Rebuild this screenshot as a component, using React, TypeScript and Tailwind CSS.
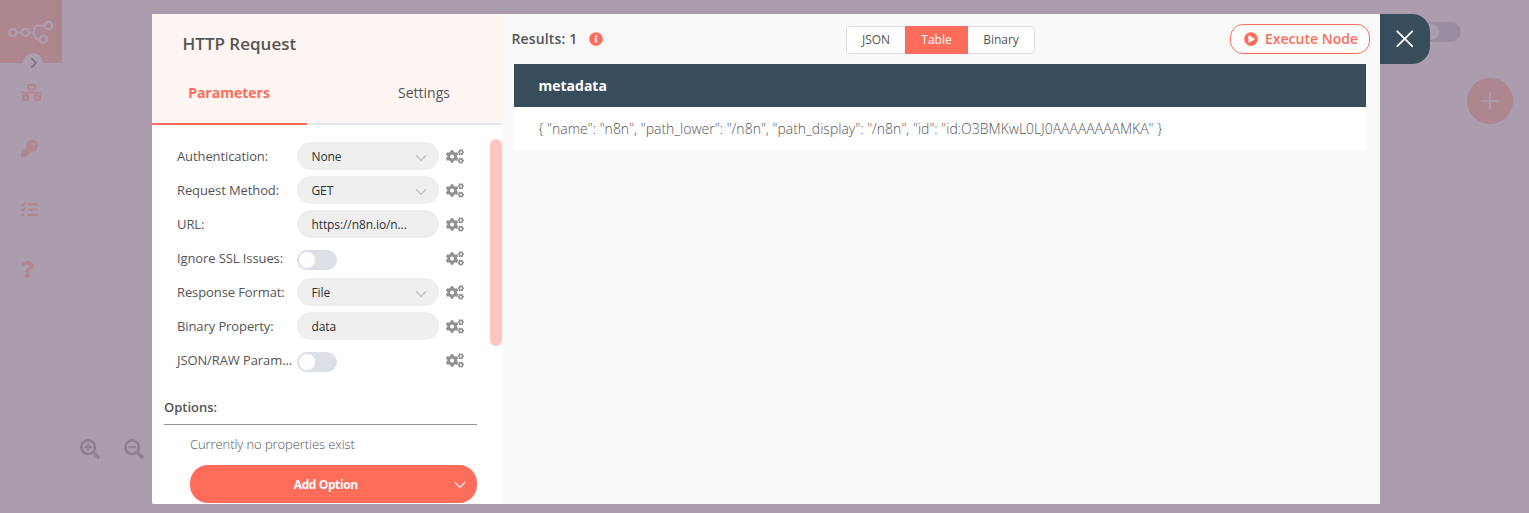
import type { ReactNode } from 'react';
import {
  FaChevronRight,
  FaCogs,
  FaInfoCircle,
  FaKey,
  FaNetworkWired,
  FaPlayCircle,
  FaQuestion,
  FaSearchMinus,
  FaSearchPlus,
  FaTasks,
} from 'react-icons/fa';

function Logo() {
  return (
    <svg width="46" height="24" viewBox="0 0 46 24" fill="none" stroke="#ab9dad" strokeWidth="2.2">
      <circle cx="4.7" cy="12.5" r="3.6" />
      <circle cx="17.3" cy="12.5" r="3.6" />
      <circle cx="40.4" cy="5.5" r="3.6" />
      <circle cx="35.4" cy="19.3" r="3.6" />
      <path d="M8.3 12.5H13.7M20.9 12.5H24.5M36.8 5.5H30.5C27.8 5.5 26.8 7 26.4 9C26 11.2 25.6 12.5 24 12.5C25.6 12.5 26 13.6 26.4 15.4C26.9 18 28 19.3 30.5 19.3H31.8" />
    </svg>
  );
}

function Chevron({ className }: { className: string }) {
  return (
    <svg className={className} width="12" height="8" viewBox="0 0 12 8" fill="none" stroke="currentColor" strokeWidth="1.2">
      <path d="M1 1.2L6 6.4L11 1.2" />
    </svg>
  );
}

function Sidebar() {
  return (
    <aside className="relative flex w-[62px] shrink-0 flex-col bg-[#ab9dad] text-[#b3858e]">
      <div className="flex h-[63px] items-start bg-[#ad868f] pl-2 pt-5">
        <Logo />
      </div>
      <div className="absolute left-[23px] top-[53px] flex h-5 w-5 items-center justify-center rounded-full bg-[#ab9dad] pl-px text-[#84758a]">
        <FaChevronRight size={12} />
      </div>
      <nav className="flex flex-col pl-[21px]">
        <div className="flex h-[59px] items-center"><FaNetworkWired className="h-[17px] w-[21px]" /></div>
        <div className="flex h-[53px] items-center"><FaKey size={17} /></div>
        <div className="flex h-[69px] items-center"><FaTasks size={17} /></div>
        <div className="flex h-[51px] items-center"><FaQuestion className="h-[17px] w-[13px]" /></div>
      </nav>
    </aside>
  );
}

function Workspace() {
  return (
    <div className="flex h-[513px] w-full bg-[#ab9dad]">
      <Sidebar />
      <div className="flex min-w-0 flex-1 flex-col">
        <header className="flex h-[63px] shrink-0 items-start justify-end pr-[68px] pt-[22px]">
          <div className="flex h-5 w-10 items-center rounded-full bg-[#9a8d9f] pl-0.5">
            <div className="h-4 w-4 rounded-full bg-[#ab9dad]" />
          </div>
        </header>
        <main className="relative flex-1 bg-[linear-gradient(to_right,#a89bae_1px,transparent_1px),linear-gradient(to_bottom,#a89bae_1px,transparent_1px)] bg-size-[50px_50px] bg-position-[11px_35px]">
          <div className="absolute right-4 top-[15px] flex h-[46px] w-[46px] items-center justify-center rounded-full bg-[#ad868f] pr-px">
            <svg width="20" height="20" viewBox="0 0 20 20" stroke="#ab9dad" strokeWidth="1.7">
              <path d="M10 1V19M1 10H19" />
            </svg>
          </div>
          <div className="absolute left-2 top-[366px] flex gap-1 text-[#8f8192]">
            <div className="flex h-10 w-10 items-center justify-center bg-[#ab9dad]"><FaSearchPlus size={20} /></div>
            <div className="flex h-10 w-10 items-center justify-center bg-[#ab9dad] pr-px"><FaSearchMinus size={20} /></div>
          </div>
        </main>
      </div>
    </div>
  );
}

function Select({ value }: { value: string }) {
  return (
    <div className="flex h-7 w-[142px] items-center justify-between rounded-full bg-[#efefef] pl-[14.5px] pr-[12px] text-[12px] tracking-[-0.1px] text-[#303030]">
      <span className="pt-px">{value}</span>
      <Chevron className="mt-[3px] text-[#b8bcc6]" />
    </div>
  );
}

function TextField({ value }: { value: string }) {
  return (
    <div className="flex h-7 w-[142px] items-center rounded-full bg-[#efefef] pl-[14.5px] pt-px text-[12px] tracking-[-0.1px] text-[#303030]">
      {value}
    </div>
  );
}

function Toggle() {
  return (
    <div className="mt-1 flex h-5 w-10 items-center rounded-full bg-[#dcdfe6] pl-0.5">
      <div className="h-4 w-4 rounded-full bg-white" />
    </div>
  );
}

function ParameterRow({ label, children }: { label: string; children: ReactNode }) {
  return (
    <div className="flex h-[34px] items-center">
      <div className="w-[120px] shrink-0 whitespace-nowrap pt-0.5 text-[13px] tracking-[-0.1px]">{label}</div>
      <div className="w-[142px]">{children}</div>
      <FaCogs className="ml-[7px] h-[15px] w-[18px] text-[#909090]" />
    </div>
  );
}

function SettingsPanel() {
  return (
    <section className="flex w-[350px] shrink-0 flex-col overflow-hidden bg-white text-[#555]">
      <div className="flex h-[111px] shrink-0 flex-col bg-[#fff5f2]">
        <h1 className="pl-[30.5px] pt-[17px] text-[17px] font-semibold leading-[26px]">HTTP Request</h1>
        <div className="flex flex-1 text-[14px]">
          <div className="flex w-[155px] justify-center border-b-2 border-[#ff6d5a] pr-px pt-[25px] font-bold text-[#ff6d5a]">Parameters</div>
          <div className="flex flex-1 justify-center border-b-2 border-[#e4e7ed] pl-[39px] pt-[25px]">Settings</div>
        </div>
      </div>
      <div className="flex h-[379px] justify-between">
        <div className="pl-3 pt-[14px]">
          <div className="pl-[13px]">
            <ParameterRow label="Authentication:"><Select value="None" /></ParameterRow>
            <ParameterRow label="Request Method:"><Select value="GET" /></ParameterRow>
            <ParameterRow label="URL:"><TextField value="https://n8n.io/n..." /></ParameterRow>
            <ParameterRow label="Ignore SSL Issues:"><Toggle /></ParameterRow>
            <ParameterRow label="Response Format:"><Select value="File" /></ParameterRow>
            <ParameterRow label="Binary Property:"><TextField value="data" /></ParameterRow>
            <ParameterRow label="JSON/RAW Param..."><Toggle /></ParameterRow>
          </div>
          <h2 className="mt-5 h-7 w-[313px] border-b border-[#909399] text-[13px] font-semibold leading-5">Options:</h2>
          <p className="pl-[26px] pt-[9px] text-[13px] font-light leading-5 tracking-[-0.08px]">Currently no properties exist</p>
          <button className="ml-[26px] mt-[11px] flex h-[38px] w-[287px] items-center rounded-[18px] bg-[#ff6d5a] pr-[11.5px] text-[12px] font-bold tracking-[-0.4px] text-white">
            <span className="flex-1 pl-2 pt-0.5">Add Option</span>
            <Chevron className="mt-0.5" />
          </button>
        </div>
        <div className="mt-[14px] h-[207px] w-3 rounded-full bg-[#ffc5be]" />
      </div>
    </section>
  );
}

function ResultsPanel() {
  return (
    <section className="flex flex-1 flex-col bg-[#f9f9f9] text-[#555]">
      <div className="flex h-[50px] items-center pl-[9.5px] pr-[10px]">
        <div className="flex w-[334.5px] items-center text-[14px] font-semibold">
          <span className="w-[77.5px] pb-0.5 tracking-[0.15px]">Results: 1</span>
          <FaInfoCircle size={14} className="text-[#ff6d5a]" />
        </div>
        <div className="mt-[2px] flex h-7 text-[12px]">
          <div className="flex w-[59px] items-center justify-center rounded-l border border-r-0 border-[#dcdfe6] bg-white">JSON</div>
          <div className="flex w-[63px] items-center justify-center bg-[#ff6d5a] font-medium text-white">Table</div>
          <div className="flex w-[67px] items-center justify-center rounded-r border border-l-0 border-[#dcdfe6] bg-white">Binary</div>
        </div>
        <button className="ml-auto flex h-[30px] w-[140px] items-center justify-center gap-[7px] rounded-[13px] border border-[#ff6d5a] bg-white pl-0.5 text-[14px] font-semibold text-[#ff6d5a]">
          <FaPlayCircle size={14} />
          <span className="pb-0.5">Execute Node</span>
        </button>
      </div>
      <table className="ml-3 w-[852px] text-left text-[14px]">
        <thead>
          <tr className="h-[43px] bg-[#384d5b] text-white"><th className="pl-[24.5px] font-bold">metadata</th></tr>
        </thead>
        <tbody>
          <tr className="h-[43px] bg-white">
            <td className="whitespace-nowrap pl-[24.5px] font-light">
              {'{ "name": "n8n", "path_lower": "/n8n", "path_display": "/n8n", "id": "id:O3BMKwL0LJ0AAAAAAAAMKA" }'}
            </td>
          </tr>
        </tbody>
      </table>
    </section>
  );
}

export default function App() {
  return (
    <div className="relative h-[513px] w-full overflow-hidden font-['Open_Sans',sans-serif]">
      <Workspace />
      <div role="dialog" className="absolute left-[152px] top-[14px] flex h-[490px] w-[1278px]">
        <div className="flex w-[1228px] overflow-hidden rounded-bl-[2px]">
          <SettingsPanel />
          <ResultsPanel />
        </div>
        <button aria-label="Close" className="flex h-[50px] w-[50px] items-center justify-center rounded-r-[18px] bg-[#384d5b]">
          <svg width="18" height="18" viewBox="0 0 18 18" stroke="white" strokeWidth="1.8" strokeLinecap="round">
            <path d="M1.3 1.3L16.2 16.2M16.2 1.3L1.3 16.2" />
          </svg>
        </button>
      </div>
    </div>
  );
}
